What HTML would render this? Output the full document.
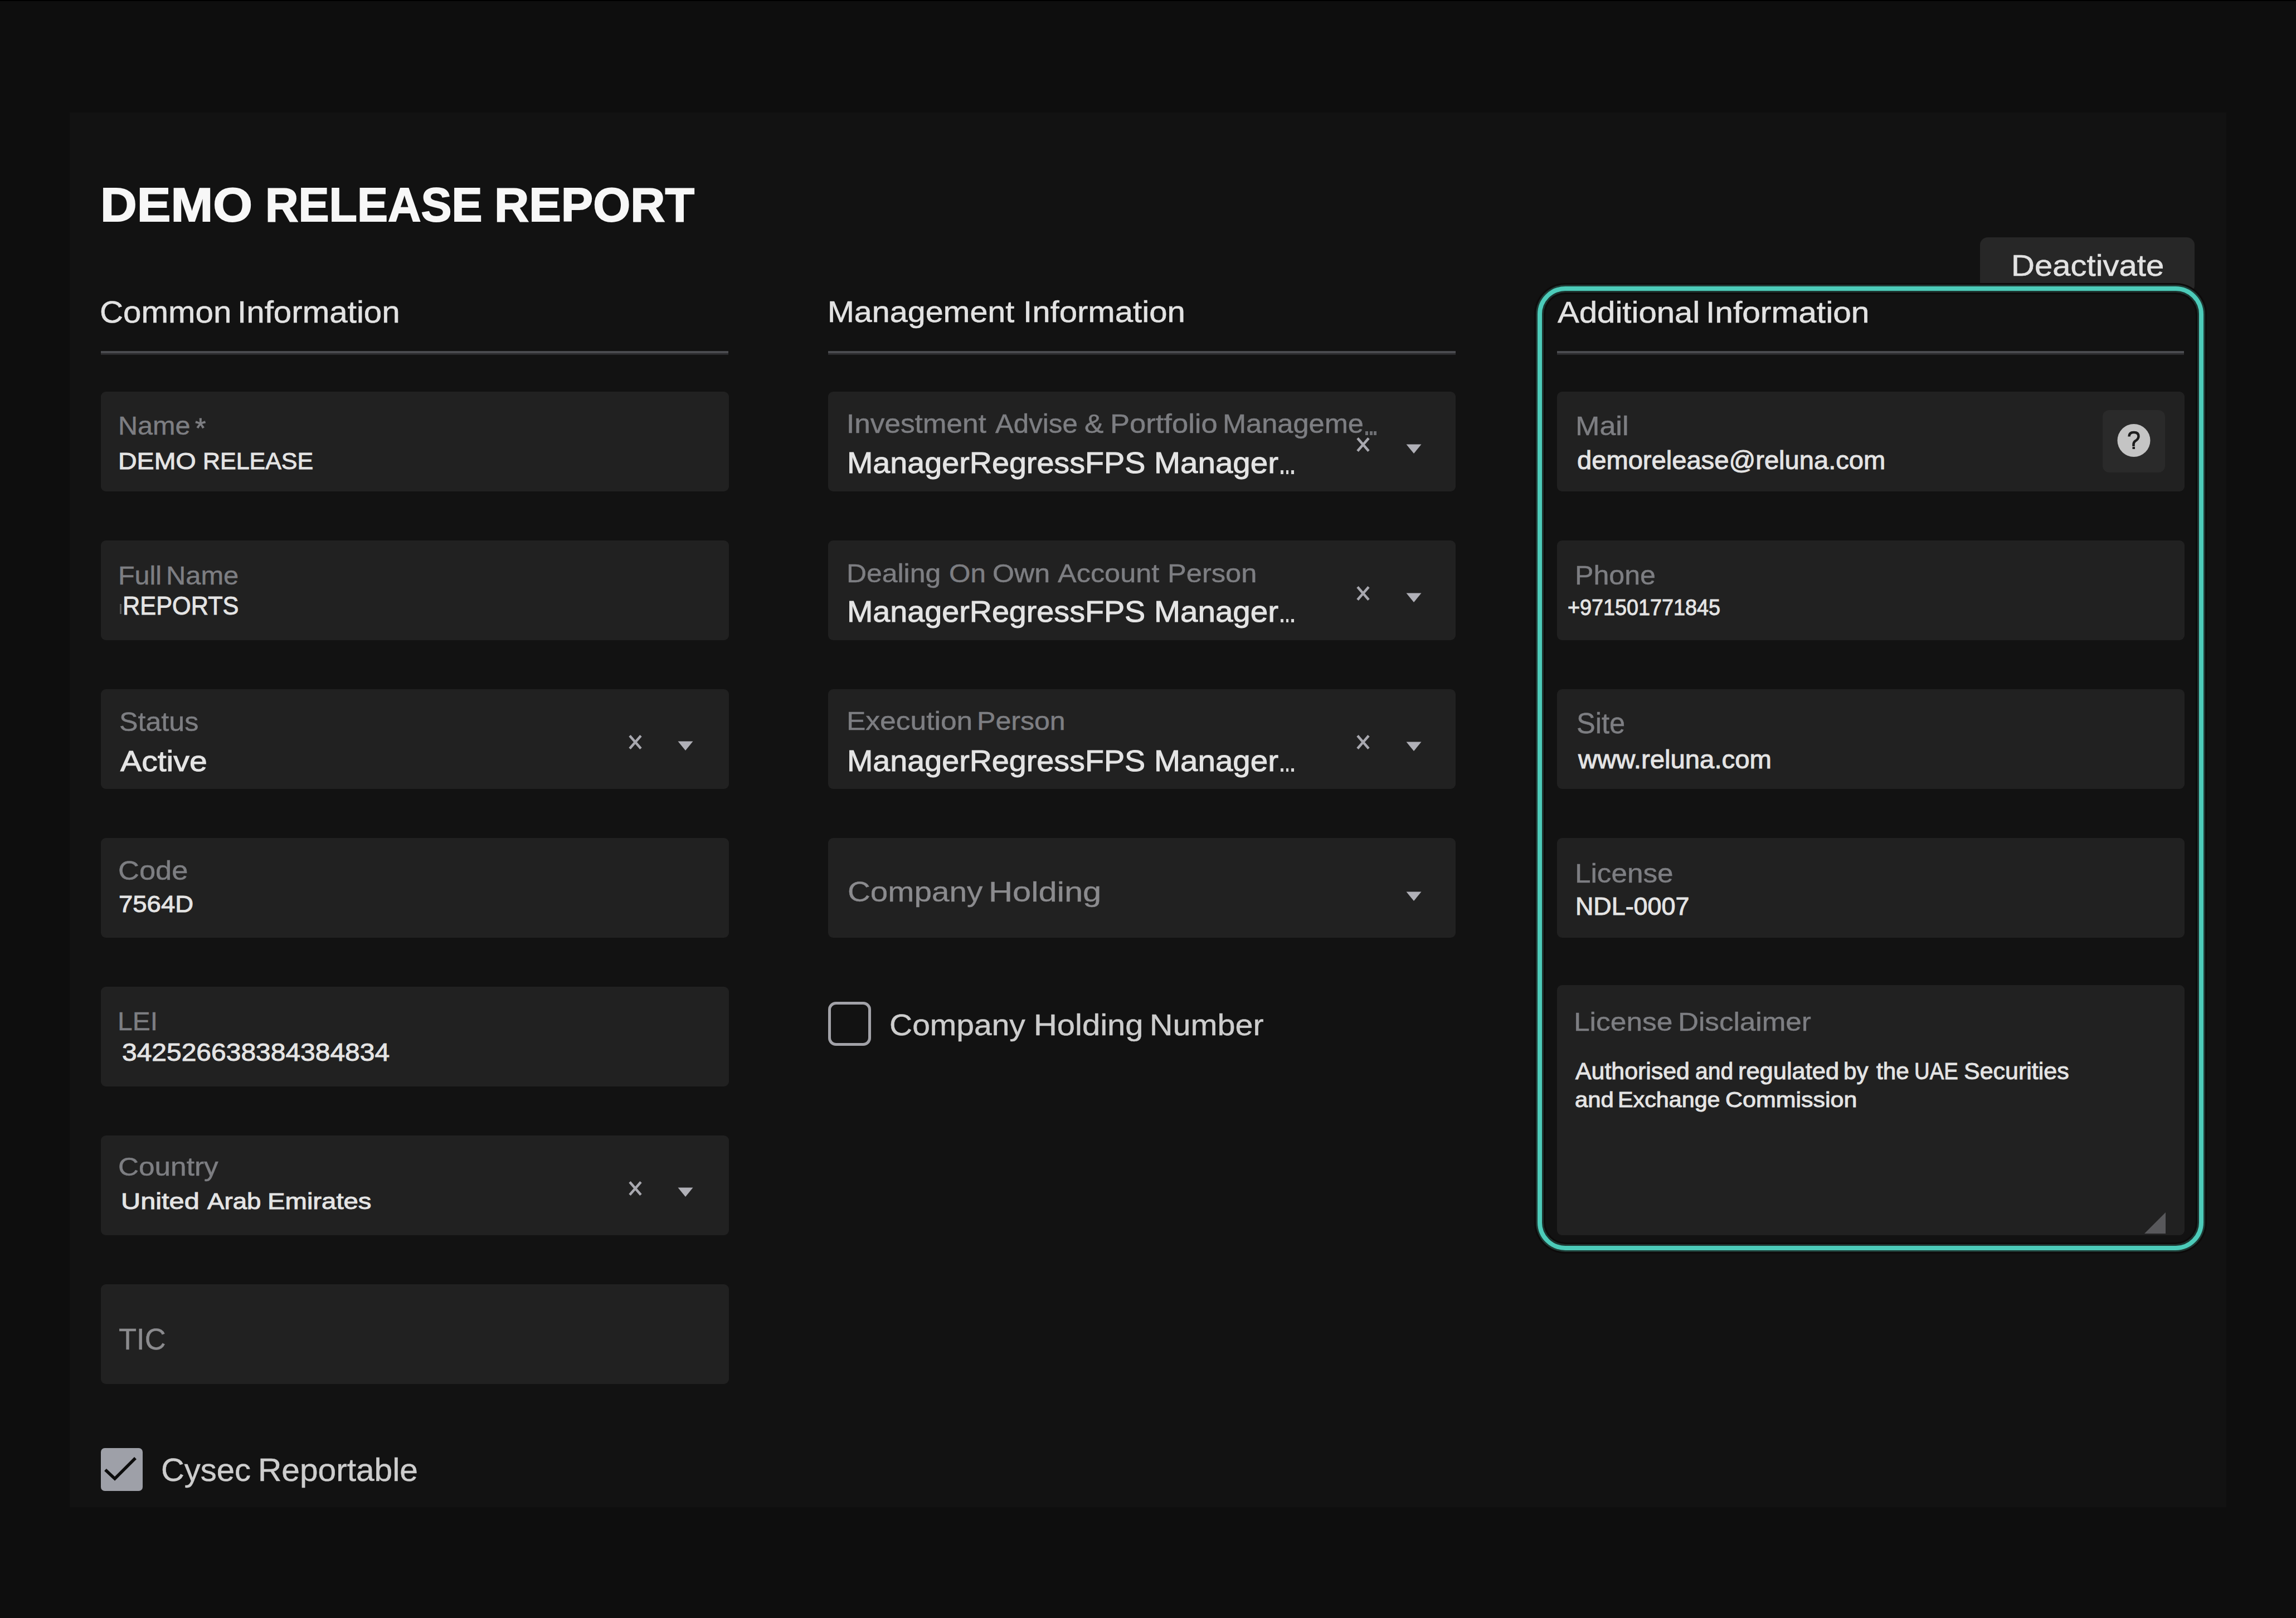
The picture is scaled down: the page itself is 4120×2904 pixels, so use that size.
<!DOCTYPE html>
<html><head><meta charset="utf-8"><style>
html,body{margin:0;padding:0;}
body{width:4120px;height:2904px;overflow:hidden;background:#0e0e0e;position:relative;font-family:"Liberation Sans", sans-serif;}
.t{position:absolute;white-space:nowrap;transform-origin:0 0;}
.a{position:absolute;}
</style></head><body>
<div class="a" style="left:0;top:0;width:4120px;height:2px;background:#000"></div>
<div class="a" style="left:125px;top:202px;width:3870px;height:2503px;background:#121212"></div>
<div class="a" style="left:3553px;top:426px;width:385px;height:100px;background:#272727;border-radius:14px"></div>
<div class="a" style="left:2759px;top:514px;width:1179px;height:1714px;border:8px solid #4ccbb9;border-radius:50px;background:#121212;box-shadow:0 0 0 3px #1f3a35, 0 0 0 6px #0d0a0a, inset 0 0 0 3px #1d3430, inset 0 0 0 6px #0d0a0a"></div>
<div class="a" style="left:181px;top:630px;width:1126px;height:4px;background:#4a4b4f"></div>
<div class="a" style="left:181px;top:634px;width:1126px;height:3px;background:#2a2a2c"></div>
<div class="a" style="left:1486px;top:630px;width:1126px;height:4px;background:#4a4b4f"></div>
<div class="a" style="left:1486px;top:634px;width:1126px;height:3px;background:#2a2a2c"></div>
<div class="a" style="left:2794px;top:630px;width:1125px;height:4px;background:#4a4b4f"></div>
<div class="a" style="left:2794px;top:634px;width:1125px;height:3px;background:#2a2a2c"></div>
<div class="a" style="left:181px;top:703px;width:1127px;height:179px;background:#212121;border-radius:9px"></div>
<div class="a" style="left:181px;top:970px;width:1127px;height:179px;background:#212121;border-radius:9px"></div>
<div class="a" style="left:181px;top:1237px;width:1127px;height:179px;background:#212121;border-radius:9px"></div>
<div class="a" style="left:181px;top:1504px;width:1127px;height:179px;background:#212121;border-radius:9px"></div>
<div class="a" style="left:181px;top:1771px;width:1127px;height:179px;background:#212121;border-radius:9px"></div>
<div class="a" style="left:181px;top:2038px;width:1127px;height:179px;background:#212121;border-radius:9px"></div>
<div class="a" style="left:181px;top:2305px;width:1127px;height:179px;background:#212121;border-radius:9px"></div>
<div class="a" style="left:1486px;top:703px;width:1126px;height:179px;background:#212121;border-radius:9px"></div>
<div class="a" style="left:1486px;top:970px;width:1126px;height:179px;background:#212121;border-radius:9px"></div>
<div class="a" style="left:1486px;top:1237px;width:1126px;height:179px;background:#212121;border-radius:9px"></div>
<div class="a" style="left:1486px;top:1504px;width:1126px;height:179px;background:#212121;border-radius:9px"></div>
<div class="a" style="left:2794px;top:703px;width:1126px;height:179px;background:#212121;border-radius:9px"></div>
<div class="a" style="left:2794px;top:970px;width:1126px;height:179px;background:#212121;border-radius:9px"></div>
<div class="a" style="left:2794px;top:1237px;width:1126px;height:179px;background:#212121;border-radius:9px"></div>
<div class="a" style="left:2794px;top:1504px;width:1126px;height:179px;background:#212121;border-radius:9px"></div>
<div class="a" style="left:2794px;top:1768px;width:1126px;height:449px;background:#212121;border-radius:9px"></div>
<svg class="a" style="left:3840px;top:2170px" width="50" height="50"><polygon points="8,44 46,6 46,44" fill="#58585b"/></svg>
<div class="a" style="left:3773px;top:736px;width:112px;height:112px;background:#2a2a2a;border-radius:12px"></div>
<svg class="a" style="left:3799px;top:761px" width="60" height="60"><circle cx="30" cy="29.5" r="29.5" fill="#c4c4c4"/><path d="M21.5 22.5 Q21.5 15 30 15 Q38.5 15 38.5 22 Q38.5 27 32 31 Q29.5 33 29.5 37 L29.5 40" stroke="#1d1d1d" stroke-width="4.5" fill="none" stroke-linecap="butt"/><rect x="27.5" y="41" width="4.5" height="4" fill="#1d1d1d"/></svg>
<svg class="a" style="left:1126.5px;top:1319px" width="26" height="26"><path d="M3 1.5 L23 24.5 M23 1.5 L3 24.5" stroke="#a9a9b0" stroke-width="4.5"/></svg>
<svg class="a" style="left:1215px;top:1329px" width="30" height="20"><polygon points="1.5,1.5 28.5,1.5 15,18" fill="#b0b0b7"/></svg>
<svg class="a" style="left:1126.5px;top:2120px" width="26" height="26"><path d="M3 1.5 L23 24.5 M23 1.5 L3 24.5" stroke="#a9a9b0" stroke-width="4.5"/></svg>
<svg class="a" style="left:1215px;top:2130px" width="30" height="20"><polygon points="1.5,1.5 28.5,1.5 15,18" fill="#b0b0b7"/></svg>
<svg class="a" style="left:2432.5px;top:785px" width="26" height="26"><path d="M3 1.5 L23 24.5 M23 1.5 L3 24.5" stroke="#a9a9b0" stroke-width="4.5"/></svg>
<svg class="a" style="left:2521.5px;top:796px" width="30" height="20"><polygon points="1.5,1.5 28.5,1.5 15,18" fill="#b0b0b7"/></svg>
<svg class="a" style="left:2432.5px;top:1052px" width="26" height="26"><path d="M3 1.5 L23 24.5 M23 1.5 L3 24.5" stroke="#a9a9b0" stroke-width="4.5"/></svg>
<svg class="a" style="left:2521.5px;top:1063px" width="30" height="20"><polygon points="1.5,1.5 28.5,1.5 15,18" fill="#b0b0b7"/></svg>
<svg class="a" style="left:2432.5px;top:1319px" width="26" height="26"><path d="M3 1.5 L23 24.5 M23 1.5 L3 24.5" stroke="#a9a9b0" stroke-width="4.5"/></svg>
<svg class="a" style="left:2521.5px;top:1330px" width="30" height="20"><polygon points="1.5,1.5 28.5,1.5 15,18" fill="#b0b0b7"/></svg>
<svg class="a" style="left:2521.5px;top:1599px" width="30" height="20"><polygon points="1.5,1.5 28.5,1.5 15,18" fill="#b0b0b7"/></svg>
<div class="a" style="left:2450.0px;top:774px;width:5px;height:7px;background:#6e6f73"></div>
<div class="a" style="left:2457.5px;top:774px;width:5px;height:7px;background:#6e6f73"></div>
<div class="a" style="left:2465.0px;top:774px;width:5px;height:7px;background:#6e6f73"></div>
<div class="a" style="left:2298.0px;top:844.0px;width:4.5px;height:6.5px;background:#d8d8d8"></div>
<div class="a" style="left:2307.5px;top:844.0px;width:4.5px;height:6.5px;background:#d8d8d8"></div>
<div class="a" style="left:2317.0px;top:844.0px;width:4.5px;height:6.5px;background:#d8d8d8"></div>
<div class="a" style="left:2298.0px;top:1110.5px;width:4.5px;height:6.5px;background:#d8d8d8"></div>
<div class="a" style="left:2307.5px;top:1110.5px;width:4.5px;height:6.5px;background:#d8d8d8"></div>
<div class="a" style="left:2317.0px;top:1110.5px;width:4.5px;height:6.5px;background:#d8d8d8"></div>
<div class="a" style="left:2298.0px;top:1378.5px;width:4.5px;height:6.5px;background:#d8d8d8"></div>
<div class="a" style="left:2307.5px;top:1378.5px;width:4.5px;height:6.5px;background:#d8d8d8"></div>
<div class="a" style="left:2317.0px;top:1378.5px;width:4.5px;height:6.5px;background:#d8d8d8"></div>
<div class="t" style="left:350px;top:744px;font-size:50px;line-height:50px;color:#7d7e82;-webkit-text-stroke:0.8px #7d7e82">*</div>
<div class="a" style="left:215px;top:1084px;width:3px;height:18px;background:#5a5a5a"></div>
<div class="a" style="left:181px;top:2599px;width:75px;height:77px;background:#9ea0a8;border-radius:7px"></div>
<svg class="a" style="left:181px;top:2599px" width="75" height="77"><path d="M8 39 L25 55 L62 18" stroke="#0c0c0c" stroke-width="5.5" fill="none"/></svg>
<div class="a" style="left:1486px;top:1798px;width:67px;height:69px;border:5px solid #a2a2a8;border-radius:14px"></div>
<div class="t" style="left:180.21px;top:326.35px;font-size:84.76px;line-height:84.76px;color:#f7f7f7;font-weight:bold;transform:scaleX(1.0736);-webkit-text-stroke:1.80px #f7f7f7">DEMO</div>
<div class="t" style="left:475.75px;top:326.35px;font-size:84.76px;line-height:84.76px;color:#f7f7f7;font-weight:bold;transform:scaleX(0.9730);-webkit-text-stroke:1.80px #f7f7f7">RELEASE</div>
<div class="t" style="left:887.01px;top:326.35px;font-size:84.76px;line-height:84.76px;color:#f7f7f7;font-weight:bold;transform:scaleX(1.0170);-webkit-text-stroke:1.80px #f7f7f7">REPORT</div>
<div class="t" style="left:178.57px;top:533.11px;font-size:55.04px;line-height:55.04px;color:#e2e2e2;transform:scaleX(1.0588);-webkit-text-stroke:0.60px #e2e2e2">Common</div>
<div class="t" style="left:426.24px;top:533.11px;font-size:55.04px;line-height:55.04px;color:#e2e2e2;transform:scaleX(1.0596);-webkit-text-stroke:0.60px #e2e2e2">Information</div>
<div class="t" style="left:1484.81px;top:533.21px;font-size:54.33px;line-height:54.33px;color:#e2e2e2;transform:scaleX(1.0573);-webkit-text-stroke:0.60px #e2e2e2">Management</div>
<div class="t" style="left:1836.16px;top:533.21px;font-size:54.33px;line-height:54.33px;color:#e2e2e2;transform:scaleX(1.0700);-webkit-text-stroke:0.60px #e2e2e2">Information</div>
<div class="t" style="left:2794.70px;top:534.31px;font-size:53.62px;line-height:53.62px;color:#e2e2e2;transform:scaleX(1.0842);-webkit-text-stroke:0.60px #e2e2e2">Additional</div>
<div class="t" style="left:3060.52px;top:534.31px;font-size:53.62px;line-height:53.62px;color:#e2e2e2;transform:scaleX(1.0942);-webkit-text-stroke:0.60px #e2e2e2">Information</div>
<div class="t" style="left:3608.76px;top:449.99px;font-size:53.76px;line-height:53.76px;color:#e2e2e2;transform:scaleX(1.0799);-webkit-text-stroke:0.60px #e2e2e2">Deactivate</div>
<div class="t" style="left:211.96px;top:740.80px;font-size:46.72px;line-height:46.72px;color:#7d7e82;transform:scaleX(1.0388);-webkit-text-stroke:0.50px #7d7e82">Name</div>
<div class="t" style="left:212.36px;top:805.78px;font-size:43.38px;line-height:43.38px;color:#e4e4e4;transform:scaleX(1.0732);-webkit-text-stroke:1.00px #e4e4e4">DEMO</div>
<div class="t" style="left:364.14px;top:805.78px;font-size:43.38px;line-height:43.38px;color:#e4e4e4;transform:scaleX(0.9902);-webkit-text-stroke:1.00px #e4e4e4">RELEASE</div>
<div class="t" style="left:211.66px;top:1008.96px;font-size:47.00px;line-height:47.00px;color:#7d7e82;transform:scaleX(1.0309);-webkit-text-stroke:0.50px #7d7e82">Full</div>
<div class="t" style="left:298.43px;top:1008.96px;font-size:47.00px;line-height:47.00px;color:#7d7e82;transform:scaleX(1.0392);-webkit-text-stroke:0.50px #7d7e82">Name</div>
<div class="t" style="left:219.62px;top:1065.47px;font-size:45.51px;line-height:45.51px;color:#e4e4e4;transform:scaleX(0.9513);-webkit-text-stroke:1.00px #e4e4e4">REPORTS</div>
<div class="t" style="left:213.68px;top:1271.62px;font-size:48.00px;line-height:48.00px;color:#7d7e82;transform:scaleX(1.0460);-webkit-text-stroke:0.50px #7d7e82">Status</div>
<div class="t" style="left:216.10px;top:1340.56px;font-size:51.91px;line-height:51.91px;color:#e4e4e4;transform:scaleX(1.1016);-webkit-text-stroke:1.00px #e4e4e4">Active</div>
<div class="t" style="left:212.39px;top:1539.12px;font-size:48.00px;line-height:48.00px;color:#7d7e82;transform:scaleX(1.0936);-webkit-text-stroke:0.50px #7d7e82">Code</div>
<div class="t" style="left:212.97px;top:1600.78px;font-size:43.38px;line-height:43.38px;color:#e4e4e4;transform:scaleX(1.0492);-webkit-text-stroke:1.00px #e4e4e4">7564D</div>
<div class="t" style="left:211.10px;top:1811.01px;font-size:45.30px;line-height:45.30px;color:#7d7e82;transform:scaleX(1.0586);-webkit-text-stroke:0.50px #7d7e82">LEI</div>
<div class="t" style="left:218.50px;top:1867.26px;font-size:44.94px;line-height:44.94px;color:#e4e4e4;transform:scaleX(1.0673);-webkit-text-stroke:1.00px #e4e4e4">342526638384384834</div>
<div class="t" style="left:212.15px;top:2071.32px;font-size:46.58px;line-height:46.58px;color:#7d7e82;transform:scaleX(1.1013);-webkit-text-stroke:0.50px #7d7e82">Country</div>
<div class="t" style="left:217.46px;top:2135.59px;font-size:41.24px;line-height:41.24px;color:#e4e4e4;transform:scaleX(1.1808);-webkit-text-stroke:1.00px #e4e4e4">United</div>
<div class="t" style="left:371.90px;top:2135.59px;font-size:41.24px;line-height:41.24px;color:#e4e4e4;transform:scaleX(1.1071);-webkit-text-stroke:1.00px #e4e4e4">Arab</div>
<div class="t" style="left:479.51px;top:2135.59px;font-size:41.24px;line-height:41.24px;color:#e4e4e4;transform:scaleX(1.1459);-webkit-text-stroke:1.00px #e4e4e4">Emirates</div>
<div class="t" style="left:212.78px;top:2377.29px;font-size:53.76px;line-height:53.76px;color:#8b8b8e;transform:scaleX(0.9774);-webkit-text-stroke:0.40px #8b8b8e">TIC</div>
<div class="t" style="left:288.83px;top:2610.59px;font-size:56.53px;line-height:56.53px;color:#cdcdcd;transform:scaleX(1.0258);-webkit-text-stroke:0.50px #cdcdcd">Cysec</div>
<div class="t" style="left:462.67px;top:2610.59px;font-size:56.53px;line-height:56.53px;color:#cdcdcd;transform:scaleX(1.0376);-webkit-text-stroke:0.50px #cdcdcd">Reportable</div>
<div class="t" style="left:1519.24px;top:737.22px;font-size:47.29px;line-height:47.29px;color:#7d7e82;transform:scaleX(1.0845);-webkit-text-stroke:0.50px #7d7e82">Investment</div>
<div class="t" style="left:1785.95px;top:737.22px;font-size:47.29px;line-height:47.29px;color:#7d7e82;transform:scaleX(1.0413);-webkit-text-stroke:0.50px #7d7e82">Advise</div>
<div class="t" style="left:1946.05px;top:737.22px;font-size:47.29px;line-height:47.29px;color:#7d7e82;transform:scaleX(1.0861);-webkit-text-stroke:0.50px #7d7e82">&amp;</div>
<div class="t" style="left:1991.55px;top:737.22px;font-size:47.29px;line-height:47.29px;color:#7d7e82;transform:scaleX(1.1110);-webkit-text-stroke:0.50px #7d7e82">Portfolio</div>
<div class="t" style="left:2193.80px;top:737.22px;font-size:47.29px;line-height:47.29px;color:#7d7e82;transform:scaleX(1.0694);-webkit-text-stroke:0.50px #7d7e82">Manageme</div>
<div class="t" style="left:1519.55px;top:804.01px;font-size:54.33px;line-height:54.33px;color:#e4e4e4;transform:scaleX(1.0247);-webkit-text-stroke:1.00px #e4e4e4">ManagerRegressFPS</div>
<div class="t" style="left:2071.09px;top:804.01px;font-size:54.33px;line-height:54.33px;color:#e4e4e4;transform:scaleX(1.0399);-webkit-text-stroke:1.00px #e4e4e4">Manager</div>
<div class="t" style="left:1519.55px;top:1071.35px;font-size:53.33px;line-height:53.33px;color:#e4e4e4;transform:scaleX(1.0438);-webkit-text-stroke:1.00px #e4e4e4">ManagerRegressFPS</div>
<div class="t" style="left:2071.09px;top:1071.35px;font-size:53.33px;line-height:53.33px;color:#e4e4e4;transform:scaleX(1.0594);-webkit-text-stroke:1.00px #e4e4e4">Manager</div>
<div class="t" style="left:1519.55px;top:1338.99px;font-size:53.76px;line-height:53.76px;color:#e4e4e4;transform:scaleX(1.0355);-webkit-text-stroke:1.00px #e4e4e4">ManagerRegressFPS</div>
<div class="t" style="left:2071.09px;top:1338.99px;font-size:53.76px;line-height:53.76px;color:#e4e4e4;transform:scaleX(1.0510);-webkit-text-stroke:1.00px #e4e4e4">Manager</div>
<div class="t" style="left:1519.35px;top:1006.32px;font-size:46.58px;line-height:46.58px;color:#7d7e82;transform:scaleX(1.0712);-webkit-text-stroke:0.50px #7d7e82">Dealing</div>
<div class="t" style="left:1702.63px;top:1006.32px;font-size:46.58px;line-height:46.58px;color:#7d7e82;transform:scaleX(1.0604);-webkit-text-stroke:0.50px #7d7e82">On</div>
<div class="t" style="left:1781.30px;top:1006.32px;font-size:46.58px;line-height:46.58px;color:#7d7e82;transform:scaleX(1.0784);-webkit-text-stroke:0.50px #7d7e82">Own</div>
<div class="t" style="left:1898.25px;top:1006.32px;font-size:46.58px;line-height:46.58px;color:#7d7e82;transform:scaleX(1.0834);-webkit-text-stroke:0.50px #7d7e82">Account</div>
<div class="t" style="left:2095.30px;top:1006.32px;font-size:46.58px;line-height:46.58px;color:#7d7e82;transform:scaleX(1.0861);-webkit-text-stroke:0.50px #7d7e82">Person</div>
<div class="t" style="left:1519.23px;top:1271.92px;font-size:45.87px;line-height:45.87px;color:#7d7e82;transform:scaleX(1.1231);-webkit-text-stroke:0.50px #7d7e82">Execution</div>
<div class="t" style="left:1753.34px;top:1271.92px;font-size:45.87px;line-height:45.87px;color:#7d7e82;transform:scaleX(1.0922);-webkit-text-stroke:0.50px #7d7e82">Person</div>
<div class="t" style="left:1520.55px;top:1576.42px;font-size:50.06px;line-height:50.06px;color:#8b8b8e;transform:scaleX(1.1307);-webkit-text-stroke:0.40px #8b8b8e">Company</div>
<div class="t" style="left:1773.54px;top:1576.42px;font-size:50.06px;line-height:50.06px;color:#8b8b8e;transform:scaleX(1.1917);-webkit-text-stroke:0.40px #8b8b8e">Holding</div>
<div class="t" style="left:1596.28px;top:1813.30px;font-size:53.69px;line-height:53.69px;color:#cdcdcd;transform:scaleX(1.0613);-webkit-text-stroke:0.50px #cdcdcd">Company</div>
<div class="t" style="left:1854.72px;top:1813.30px;font-size:53.69px;line-height:53.69px;color:#cdcdcd;transform:scaleX(1.0792);-webkit-text-stroke:0.50px #cdcdcd">Holding</div>
<div class="t" style="left:2063.25px;top:1813.30px;font-size:53.69px;line-height:53.69px;color:#cdcdcd;transform:scaleX(1.0724);-webkit-text-stroke:0.50px #cdcdcd">Number</div>
<div class="t" style="left:2826.68px;top:741.12px;font-size:48.00px;line-height:48.00px;color:#7d7e82;transform:scaleX(1.0852);-webkit-text-stroke:0.50px #7d7e82">Mail</div>
<div class="t" style="left:2829.53px;top:803.60px;font-size:45.48px;line-height:45.48px;color:#e4e4e4;transform:scaleX(1.0362);-webkit-text-stroke:1.00px #e4e4e4">demorelease@reluna.com</div>
<div class="t" style="left:2826.33px;top:1009.12px;font-size:48.00px;line-height:48.00px;color:#7d7e82;transform:scaleX(1.0443);-webkit-text-stroke:0.50px #7d7e82">Phone</div>
<div class="t" style="left:2812.73px;top:1070.79px;font-size:39.82px;line-height:39.82px;color:#e4e4e4;transform:scaleX(0.9480);-webkit-text-stroke:1.00px #e4e4e4">+971501771845</div>
<div class="t" style="left:2828.67px;top:1273.23px;font-size:51.41px;line-height:51.41px;color:#7d7e82;transform:scaleX(0.9835);-webkit-text-stroke:0.50px #7d7e82">Site</div>
<div class="t" style="left:2831.74px;top:1338.73px;font-size:46.98px;line-height:46.98px;color:#e4e4e4;transform:scaleX(1.0066);-webkit-text-stroke:1.00px #e4e4e4">www.reluna.com</div>
<div class="t" style="left:2826.25px;top:1544.12px;font-size:48.00px;line-height:48.00px;color:#7d7e82;transform:scaleX(1.0673);-webkit-text-stroke:0.50px #7d7e82">License</div>
<div class="t" style="left:2827.00px;top:1605.22px;font-size:44.52px;line-height:44.52px;color:#e4e4e4;transform:scaleX(1.0070);-webkit-text-stroke:1.00px #e4e4e4">NDL-0007</div>
<div class="t" style="left:2824.23px;top:1811.32px;font-size:46.58px;line-height:46.58px;color:#7d7e82;transform:scaleX(1.1050);-webkit-text-stroke:0.50px #7d7e82">License</div>
<div class="t" style="left:3011.25px;top:1811.32px;font-size:46.58px;line-height:46.58px;color:#7d7e82;transform:scaleX(1.0983);-webkit-text-stroke:0.50px #7d7e82">Disclaimer</div>
<div class="t" style="left:2827.00px;top:1901.62px;font-size:42.38px;line-height:42.38px;color:#e4e4e4;transform:scaleX(1.0113);-webkit-text-stroke:1.00px #e4e4e4">Authorised</div>
<div class="t" style="left:3042.02px;top:1901.62px;font-size:42.38px;line-height:42.38px;color:#e4e4e4;transform:scaleX(0.9641);-webkit-text-stroke:1.00px #e4e4e4">and</div>
<div class="t" style="left:3118.78px;top:1901.62px;font-size:42.38px;line-height:42.38px;color:#e4e4e4;transform:scaleX(1.0250);-webkit-text-stroke:1.00px #e4e4e4">regulated</div>
<div class="t" style="left:3308.46px;top:1901.62px;font-size:42.38px;line-height:42.38px;color:#e4e4e4;transform:scaleX(0.9949);-webkit-text-stroke:1.00px #e4e4e4">by</div>
<div class="t" style="left:3366.50px;top:1901.62px;font-size:42.38px;line-height:42.38px;color:#e4e4e4;transform:scaleX(0.9965);-webkit-text-stroke:1.00px #e4e4e4">the</div>
<div class="t" style="left:3435.11px;top:1901.62px;font-size:42.38px;line-height:42.38px;color:#e4e4e4;transform:scaleX(0.9031);-webkit-text-stroke:1.00px #e4e4e4">UAE</div>
<div class="t" style="left:3524.16px;top:1901.62px;font-size:42.38px;line-height:42.38px;color:#e4e4e4;transform:scaleX(1.0140);-webkit-text-stroke:1.00px #e4e4e4">Securities</div>
<div class="t" style="left:2825.69px;top:1953.57px;font-size:39.49px;line-height:39.49px;color:#e4e4e4;transform:scaleX(1.0603);-webkit-text-stroke:1.00px #e4e4e4">and</div>
<div class="t" style="left:2903.28px;top:1953.57px;font-size:39.49px;line-height:39.49px;color:#e4e4e4;transform:scaleX(1.0453);-webkit-text-stroke:1.00px #e4e4e4">Exchange</div>
<div class="t" style="left:3096.49px;top:1953.57px;font-size:39.49px;line-height:39.49px;color:#e4e4e4;transform:scaleX(1.0884);-webkit-text-stroke:1.00px #e4e4e4">Commission</div>
</body></html>
